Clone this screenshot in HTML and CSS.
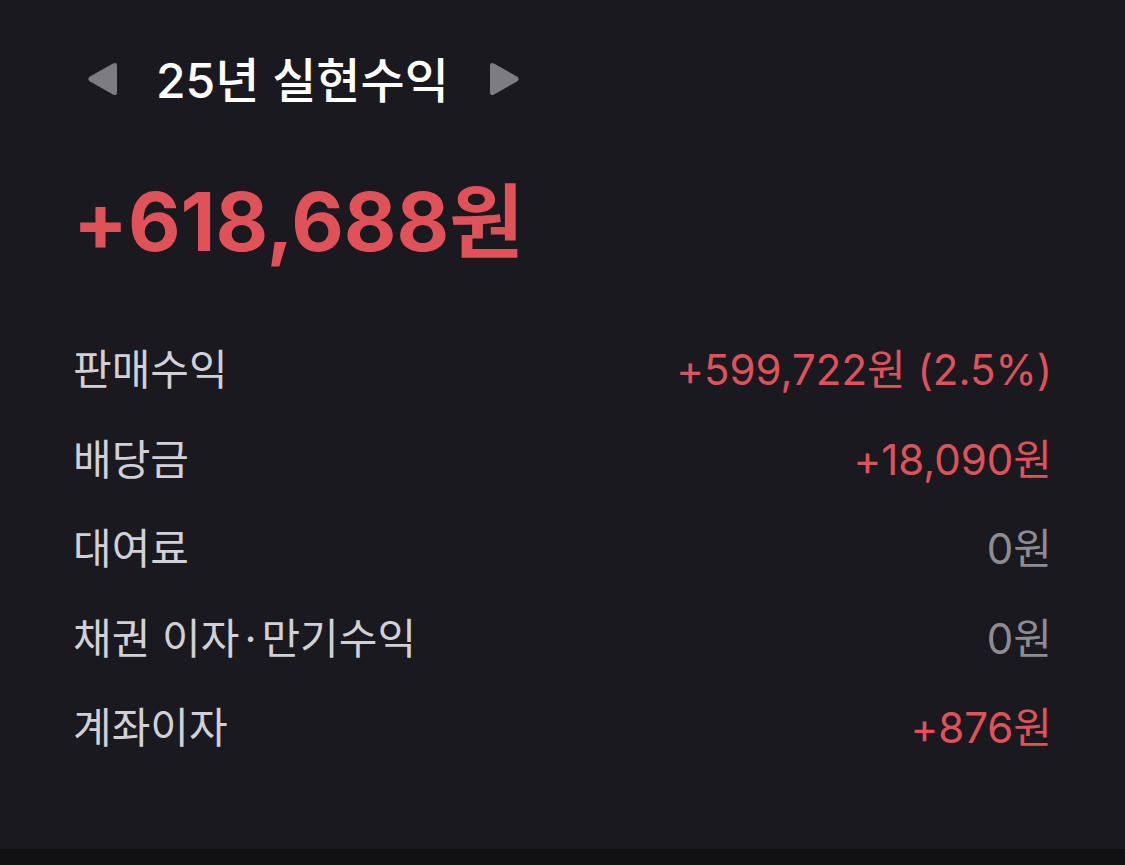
FILE: index.html
```html
<!DOCTYPE html>
<html lang="ko">
<head>
    <meta charset="UTF-8">
    <meta name="viewport" content="width=device-width, initial-scale=1.0">
    <title>실현수익</title>
    <link rel="stylesheet" href="styles.css">
</head>
<body>
    <main class="card">
        <!-- Year switcher -->
        <div class="year-nav">
            <button class="arrow" aria-label="이전">
                <svg width="32" height="36" viewBox="0 0 32 36"><path d="M4 15.5 L27 2.5 Q31 0.5 31 5 L31 31 Q31 35.5 27 33.5 L4 20.5 Q0.5 18 4 15.5 Z" fill="#7d7c83"/></svg>
            </button>
            <h1 class="title">25년 실현수익</h1>
            <button class="arrow" aria-label="다음">
                <svg width="32" height="36" viewBox="0 0 32 36"><path d="M28 15.5 L5 2.5 Q1 0.5 1 5 L1 31 Q1 35.5 5 33.5 L28 20.5 Q31.5 18 28 15.5 Z" fill="#7d7c83"/></svg>
            </button>
        </div>

        <div class="total">+618,688원</div>

        <!-- Breakdown -->
        <ul class="rows">
            <li class="row"><span class="label">판매수익</span><span class="value up">+599,722원 (2.5%)</span></li>
            <li class="row"><span class="label">배당금</span><span class="value up">+18,090원</span></li>
            <li class="row"><span class="label">대여료</span><span class="value zero">0원</span></li>
            <li class="row"><span class="label">채권 이자<span class="dot">·</span>만기수익</span><span class="value zero">0원</span></li>
            <li class="row"><span class="label">계좌이자</span><span class="value up">+876원</span></li>
        </ul>
    </main>
    <div class="bottom-bar"></div>
</body>
</html>
```

FILE: styles.css
```css
body {
    margin: 0;
    padding: 0;
    background-color: #111113;
    font-family: "Inter", "Noto Sans CJK KR", sans-serif;
}
.card {
    height: 849px;
    box-sizing: border-box;
    background-color: #1a191f;
    padding: 36px 73px 0 73px;
}
.year-nav {
    display: flex;
    align-items: center;
    height: 86px;
    margin-left: 13px;
}
.arrow {
    background: none;
    border: none;
    padding: 0;
    display: flex;
    cursor: pointer;
}
.title {
    margin: -5px 40px 0 38px;
    font-size: 48px;
    font-weight: 500;
    color: #ffffff;
}
.total {
    margin-top: 55px;
    font-size: 81px;
    font-weight: 700;
    color: #e0525a;
    line-height: 90px;
}
.rows {
    list-style-type: none;
    margin: 55px 0 0 0;
    padding: 0;
}
.row {
    display: flex;
    justify-content: space-between;
    align-items: center;
    height: 89.5px;
    font-size: 42px;
}
.label {
    color: #d1d0d6;
}
.dot {
    margin: 0 5px;
}
.value.up {
    color: #e0525a;
}
.value.zero {
    color: #8d8c92;
}
.bottom-bar {
    height: 16px;
}
```
